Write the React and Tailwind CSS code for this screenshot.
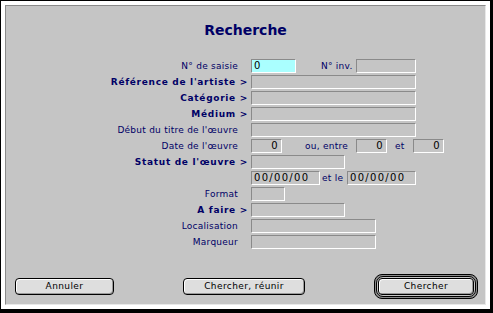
import React from 'react';

const label = "text-[9px] tracking-[0.25px] text-[#000066] leading-[14px] whitespace-nowrap";
const boldLabel = "text-[9px] font-bold tracking-[0.7px] text-[#000066] leading-[14px] whitespace-nowrap";

function Field({ w, value = '', align = 'left', cyan = false }) {
  return (
    <div
      className={`h-[14px] ${w} border border-t-[#8a8a8a] border-l-[#8a8a8a] border-r-white border-b-white text-[10px] tracking-[1.3px] leading-[12px] text-black ${
        cyan ? 'bg-[#aaffff]' : 'bg-[#c5c5c5]'
      } ${align === 'right' ? 'text-right pr-[2px]' : 'text-left pl-[2px]'}`}
    >
      {value}
    </div>
  );
}

function Row({ text, bold, children }) {
  return (
    <div className="flex h-[16px]">
      <div className="w-[243px] flex justify-end">
        {text && (bold ? (
          <span className={`${boldLabel} pr-[1px]`}>{text} &gt;</span>
        ) : (
          <span className={`${label} pr-[11px]`}>{text}</span>
        ))}
      </div>
      <div className="ml-[2px] flex items-start">{children}</div>
    </div>
  );
}

function Button({ w, children }) {
  return (
    <button className={`block h-[17px] ${w} rounded-[4px] border border-black bg-[#dedede] shadow-[inset_1px_1px_0_#ffffff,inset_-1px_-1px_0_#9a9a9a] text-[9px] tracking-[0.4px] leading-[15px] text-black`}>
      {children}
    </button>
  );
}

export default function App() {
  return (
    <div className="w-[493px] h-[313px] bg-black pt-px pl-px pr-[3px] pb-[4px] font-['DejaVu_Sans',sans-serif]">
      <div className="h-full bg-white p-[4px]">
        <div className="h-full border border-t-[#8a8a8a] border-l-[#8a8a8a] border-r-[#e8e8e8] border-b-[#e8e8e8] bg-[#c5c5c5] flex flex-col">
          <div className="pt-[16px] h-[53px] text-center text-[14px] font-bold leading-[16px] text-[#000066]">
            Recherche
          </div>

          <div className="flex flex-col">
            <Row text="N° de saisie">
              <Field w="w-[45px]" value="0" cyan />
              <span className={`${label} ml-[25px] mr-[2px] w-[33px]`}>N° inv.</span>
              <Field w="w-[60px]" />
            </Row>
            <Row text="Référence de l'artiste" bold>
              <Field w="w-[165px]" />
            </Row>
            <Row text="Catégorie" bold>
              <Field w="w-[165px]" />
            </Row>
            <Row text="Médium" bold>
              <Field w="w-[165px]" />
            </Row>
            <Row text="Début du titre de l'œuvre">
              <Field w="w-[165px]" />
            </Row>
            <Row text="Date de l'œuvre">
              <Field w="w-[31px]" value="0" align="right" />
              <span className={`${label} tracking-[0.7px] ml-[23px] mr-[2px] w-[49px]`}>ou, entre</span>
              <Field w="w-[31px]" value="0" align="right" />
              <span className={`${label} ml-[8px] mr-[8px] w-[10px]`}>et</span>
              <Field w="w-[31px]" value="0" align="right" />
            </Row>
            <Row text="Statut de l'œuvre" bold>
              <Field w="w-[94px]" />
            </Row>
            <Row>
              <Field w="w-[69px]" value="00/00/00" />
              <span className={`${label} ml-[2px] mr-[3px] w-[22px]`}>et le</span>
              <Field w="w-[69px]" value="00/00/00" />
            </Row>
            <Row text="Format">
              <Field w="w-[34px]" />
            </Row>
            <Row text="A faire" bold>
              <Field w="w-[94px]" />
            </Row>
            <Row text="Localisation">
              <Field w="w-[125px]" />
            </Row>
            <Row text="Marqueur">
              <Field w="w-[125px]" />
            </Row>
          </div>

          <div className="mt-[23px] flex items-center justify-between pl-[9px] pr-[7px]">
            <Button w="w-[99px]">Annuler</Button>
            <Button w="w-[122px]">Chercher, réunir</Button>
            <div className="flex rounded-[8px] border border-black bg-[#8a8a8a] p-px">
              <div className="flex rounded-[7px] border border-black bg-[#c5c5c5] p-px">
                <Button w="w-[96px]">Chercher</Button>
              </div>
            </div>
          </div>
        </div>
      </div>
    </div>
  );
}
